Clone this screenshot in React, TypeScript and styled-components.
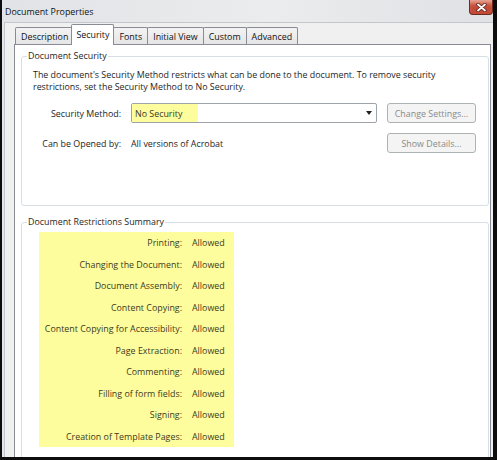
import React from "react";
import styled, { createGlobalStyle } from "styled-components";

const FONT = `"Segoe UI", "Open Sans", "Noto Sans", sans-serif`;

const GlobalStyle = createGlobalStyle`
  html, body {
    margin: 0;
    padding: 0;
    background: #0d0d0d;
  }
  body {
    font-family: ${FONT};
    font-size: 8.9px;
    color: #1e1e1e;
  }
  * {
    box-sizing: border-box;
  }
`;

const Screen = styled.div`
  width: 497px;
  height: 460px;
  padding: 0 4px 3px 2px;
  background: #0d0d0d;
`;

const Window = styled.div`
  width: 100%;
  height: 100%;
  display: flex;
  flex-direction: column;
  background: #e4e6e9;
  overflow: hidden;
`;

const TitleBar = styled.div`
  height: 22px;
  flex: none;
  display: flex;
  justify-content: space-between;
  align-items: flex-start;
  background: linear-gradient(to right, #e1e3e6, #ebecee 55%, #dfe1e4);
`;

const Title = styled.span`
  padding-left: 3px;
  line-height: 23px;
  font-size: 8.9px;
  color: #111;
`;

const CloseButton = styled.div`
  flex: none;
  width: 24px;
  height: 15px;
  display: flex;
  align-items: center;
  justify-content: center;
  background: #c24a36;
  box-shadow: inset 0 5px 4px -2px #e9a998;
  border: 1px solid #6d2a1e;
  border-top: none;
  border-radius: 0 0 4px 4px;
`;

const Client = styled.div`
  flex: 1;
  min-height: 0;
  display: flex;
  flex-direction: column;
  margin-left: 2px;
  border-left: 1px solid #c3c6cb;
  border-top: 1px solid #c3c6cb;
  background: #f0f0f0;
  padding: 0 2px 0 9px;
`;

const TabStrip = styled.div`
  height: 21px;
  flex: none;
  display: flex;
  align-items: flex-end;
  padding-left: 1px;
`;

const Tab = styled.div<{ $active?: boolean }>`
  position: relative;
  z-index: ${(p) => (p.$active ? 2 : 1)};
  height: ${(p) => (p.$active ? 21 : 17)}px;
  margin: 0 -1px ${(p) => (p.$active ? -1 : 0)}px ${(p) => (p.$active ? -2 : 0)}px;
  padding: ${(p) => (p.$active ? "0 4px 2px" : "0 5px")};
  display: flex;
  align-items: center;
  border: 1px solid #898c95;
  border-bottom: none;
  border-radius: 2px 2px 0 0;
  background: ${(p) => (p.$active ? "#ffffff" : "linear-gradient(#f3f3f3, #e5e5e5)")};
  color: #111;
  white-space: nowrap;
`;

const TabPage = styled.div`
  flex: 1;
  min-height: 0;
  overflow: hidden;
  background: #ffffff;
  border: 1px solid #898c95;
  border-bottom: none;
  padding: 0 1px 0 6px;
`;

const GroupBox = styled.fieldset<{ $height: number; $top: number }>`
  margin: ${(p) => p.$top}px 0 0 0;
  padding: 0;
  height: ${(p) => p.$height}px;
  border: 1px solid #d5dfe5;
  border-radius: 3px;
  min-width: 0;
`;

const Legend = styled.legend`
  margin-left: 5px;
  padding: 0 1px;
  line-height: 12px;
  color: #1e1e1e;
`;

const Intro = styled.p`
  margin: 7px 0 0 11px;
  line-height: 12px;
  width: 445px;
`;

const FormGrid = styled.div`
  margin: 10px 0 0 11px;
  display: grid;
  grid-template-columns: 88px 246px 89px;
  grid-auto-rows: 20px;
  column-gap: 10px;
  row-gap: 10px;
  align-items: center;
`;

const FieldLabel = styled.span`
  text-align: right;
  white-space: nowrap;
`;

const Select = styled.div`
  height: 20px;
  display: flex;
  align-items: stretch;
  justify-content: space-between;
  border: 1px solid #9ea2a9;
  border-radius: 2px;
  background: #ffffff;
  padding-right: 4px;
`;

const Highlight = styled.span`
  display: flex;
  align-items: center;
  padding: 0 4px 0 3px;
  width: 66px;
  background: #fdfd9e;
  color: #3d3a1a;
`;

const Arrow = styled.span`
  align-self: center;
  width: 0;
  height: 0;
  border-left: 3px solid transparent;
  border-right: 3px solid transparent;
  border-top: 4px solid #222;
`;

const Button = styled.div`
  height: 20px;
  display: flex;
  align-items: center;
  justify-content: center;
  border: 1px solid #adb2b5;
  border-radius: 3px;
  background: #f4f4f4;
  color: #8a8a8a;
`;

const Value = styled.span`
  white-space: nowrap;
`;

const Summary = styled.div`
  margin: 4px 0 0 17px;
  width: 195px;
  display: grid;
  grid-template-columns: 143px 42px;
  grid-auto-rows: 21.5px;
  column-gap: 10px;
  align-items: center;
  background: #fdfd9e;
  color: #3d3a1a;
`;

const SummaryLabel = styled.span`
  text-align: right;
  white-space: nowrap;
`;

const tabs = ["Description", "Security", "Fonts", "Initial View", "Custom", "Advanced"];

const restrictions = [
  "Printing",
  "Changing the Document",
  "Document Assembly",
  "Content Copying",
  "Content Copying for Accessibility",
  "Page Extraction",
  "Commenting",
  "Filling of form fields",
  "Signing",
  "Creation of Template Pages",
];

export default function App() {
  return (
    <>
      <GlobalStyle />
      <Screen>
        <Window>
          <TitleBar>
            <Title>Document Properties</Title>
            <CloseButton>
              <svg width="11" height="9" viewBox="0 0 11 9">
                <path d="M2 1.5 L9 7.5 M9 1.5 L2 7.5" stroke="#5a2018" strokeWidth="3.4" strokeLinecap="round" />
                <path d="M2 1.5 L9 7.5 M9 1.5 L2 7.5" stroke="#ffffff" strokeWidth="1.8" strokeLinecap="round" />
              </svg>
            </CloseButton>
          </TitleBar>
          <Client>
            <TabStrip>
              {tabs.map((t) => (
                <Tab key={t} $active={t === "Security"}>
                  {t}
                </Tab>
              ))}
            </TabStrip>
            <TabPage>
              <GroupBox $top={5} $height={156}>
                <Legend>Document Security</Legend>
                <Intro>
                  The document's Security Method restricts what can be done to the document. To remove security
                  restrictions, set the Security Method to No Security.
                </Intro>
                <FormGrid>
                  <FieldLabel>Security Method:</FieldLabel>
                  <Select>
                    <Highlight>No Security</Highlight>
                    <Arrow />
                  </Select>
                  <Button>Change Settings...</Button>
                  <FieldLabel>Can be Opened by:</FieldLabel>
                  <Value>All versions of Acrobat</Value>
                  <Button>Show Details...</Button>
                </FormGrid>
              </GroupBox>
              <GroupBox $top={10} $height={280}>
                <Legend>Document Restrictions Summary</Legend>
                <Summary>
                  {restrictions.map((r) => (
                    <React.Fragment key={r}>
                      <SummaryLabel>{r}:</SummaryLabel>
                      <Value>Allowed</Value>
                    </React.Fragment>
                  ))}
                </Summary>
              </GroupBox>
            </TabPage>
          </Client>
        </Window>
      </Screen>
    </>
  );
}
